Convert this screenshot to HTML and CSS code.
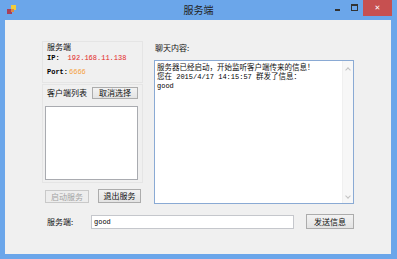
FILE: index.html
```html
<!DOCTYPE html>
<html>
<head>
<meta charset="utf-8">
<link rel="stylesheet" href="styles.css">
</head>
<body>
<div class="window">
  <div class="titlebar">
    <div class="tb-left">
      <svg class="appicon" width="10" height="10" viewBox="0 0 10 10">
        <rect x="0" y="4" width="5" height="5" fill="#a8405a"/>
        <rect x="4" y="0" width="5" height="5" fill="#f2cc3a"/>
        <rect x="4" y="4" width="3" height="3" fill="#d98a4a"/>
      </svg>
    </div>
    <div class="title">服务端</div>
    <div class="caption">
      <span class="cb min"><i></i></span>
      <span class="cb max"><i></i></span>
      <span class="cb close">✕</span>
    </div>
  </div>
  <div class="client">
    <div class="main">
      <div class="left">
        <div class="group g1">
          <div class="lbl">服务端</div>
          <div class="row ip"><span class="en key">IP:</span><span class="en red">192.168.11.138</span></div>
          <div class="row port"><span class="en key">Port:</span><span class="en orange">6666</span></div>
        </div>
        <div class="group g2">
          <div class="head"><span class="lbl">客户端列表</span><button class="btn cancel">取消选择</button></div>
          <div class="listbox"></div>
        </div>
        <div class="btnrow">
          <button class="btn start" disabled>启动服务</button>
          <button class="btn stop">退出服务</button>
        </div>
      </div>
      <div class="right">
        <div class="lbl chatlbl">聊天内容:</div>
        <div class="textarea">
          <div class="text">
            <div class="line">服务器已经启动，开始监听客户端传来的信息！</div>
            <div class="line">您在<span class="en"> 2015/4/17 14:15:57 </span>群发了信息：</div>
            <div class="line"><span class="en">good</span></div>
          </div>
          <div class="vscroll"><span class="arr up"></span><span class="arr down"></span></div>
        </div>
      </div>
    </div>
    <div class="bottom">
      <span class="lbl blbl">服务端:</span>
      <div class="input"><span class="en">good</span></div>
      <button class="btn send">发送信息</button>
    </div>
  </div>
</div>
</body>
</html>
```
FILE: styles.css
```css
html, body {
  margin: 0;
  padding: 0;
}
body {
  width: 397px;
  height: 259px;
  overflow: hidden;
  font-family: "Noto Sans CJK SC", sans-serif;
  color: #111;
}
.window {
  width: 397px;
  height: 259px;
  background: #6ba6ea;
  display: flex;
  flex-direction: column;
}
.titlebar {
  height: 20px;
  display: grid;
  grid-template-columns: 1fr auto 1fr;
  align-items: start;
}
.tb-left {
  padding: 5px 0 0 7px;
}
.appicon {
  display: block;
}
.title {
  font-size: 10px;
  line-height: 20px;
  color: #222;
}
.caption {
  justify-self: end;
  display: flex;
  margin-right: 5px;
}
.cb {
  height: 16px;
  display: flex;
  justify-content: center;
}
.min {
  width: 17px;
}
.min i {
  width: 5px;
  height: 2px;
  background: #333;
  margin-top: 9px;
}
.max {
  width: 17px;
}
.max i {
  width: 5px;
  height: 4px;
  border: 1px solid #333;
  border-top-width: 2px;
  margin-top: 4px;
}
.close {
  width: 29px;
  background: #c75050;
  color: #fff;
  font-family: "DejaVu Sans", sans-serif;
  font-size: 7px;
  line-height: 16px;
}
.client {
  flex: 1;
  margin: 0 6px 5px 5px;
  background: #f0f0f0;
  padding: 21px 0 0 37px;
  display: flex;
  flex-direction: column;
}
.main {
  display: flex;
}
.left {
  width: 101px;
  display: flex;
  flex-direction: column;
}
.lbl {
  font-size: 8px;
  line-height: 10px;
  white-space: nowrap;
}
.en {
  font-family: "Liberation Mono", monospace;
  font-size: 7px;
  color: #000;
  white-space: pre;
}
.key {
  font-weight: bold;
}
.group {
  border: 1px solid #e5e5e5;
}
.g1 {
  padding: 0 0 5px 4px;
}
.g1 .row {
  line-height: 10px;
  height: 10px;
  display: flex;
}
.ip {
  margin-top: 1px;
}
.port {
  margin-top: 4px;
}
.red {
  color: #e32626;
  margin-left: 8px;
}
.orange {
  color: #f5a03c;
  margin-left: 1px;
}
.g2 {
  margin-top: 1px;
  padding: 2px 0 2px 2px;
}
.head {
  display: flex;
  align-items: center;
  height: 12px;
}
.head .lbl {
  margin-left: 2px;
  width: 45px;
}
.btn {
  font-family: "Noto Sans CJK SC", sans-serif;
  font-size: 8px;
  line-height: 10px;
  padding: 0;
  margin: 0;
  border: 1px solid #acacac;
  background: linear-gradient(#f2f2f2, #e3e3e3);
  color: #111;
  display: flex;
  align-items: center;
  justify-content: center;
}
.cancel {
  width: 46px;
  height: 12px;
}
.listbox {
  margin-top: 7px;
  width: 93px;
  height: 74px;
  box-sizing: border-box;
  border: 1px solid #a9abb0;
  background: #fff;
}
.btnrow {
  display: flex;
  margin-top: 7px;
  padding-left: 3px;
}
.start {
  width: 44px;
  height: 13px;
  border-color: #c9c9c9;
  background: #ededed;
  color: #a3a3a3;
}
.stop {
  width: 43px;
  height: 14px;
  margin-left: 9px;
  margin-top: -1px;
}
.right {
  margin-left: 11px;
  display: flex;
  flex-direction: column;
}
.chatlbl {
  margin-top: 2px;
  padding-left: 1px;
}
.textarea {
  margin-top: 7px;
  width: 200px;
  height: 144px;
  box-sizing: border-box;
  border: 1px solid #8aaad4;
  background: #fff;
  display: flex;
}
.text {
  flex: 1;
  padding: 1px 0 0 2px;
  font-size: 7.5px;
  line-height: 9px;
  white-space: nowrap;
  color: #111;
}
.line {
  height: 9px;
}
.vscroll {
  width: 10px;
  background: #f7f7f7;
  border-left: 1px solid #f0f0f0;
  display: flex;
  flex-direction: column;
  justify-content: space-between;
  align-items: center;
  padding: 5px 0 5px;
}
.arr {
  width: 3px;
  height: 3px;
  border-left: 1px solid #c2c2c2;
  border-top: 1px solid #c2c2c2;
}
.up {
  transform: rotate(45deg);
  margin-top: 2px;
}
.down {
  transform: rotate(225deg);
}
.bottom {
  display: flex;
  align-items: center;
  margin-top: 10px;
  height: 15px;
  padding-left: 5px;
}
.blbl {
  width: 44px;
}
.input {
  width: 203px;
  height: 14px;
  box-sizing: border-box;
  border: 1px solid #c5c7cc;
  background: #fff;
  padding-left: 2px;
  display: flex;
  align-items: center;
}
.send {
  margin-left: 12px;
  width: 48px;
  height: 15px;
}
```
